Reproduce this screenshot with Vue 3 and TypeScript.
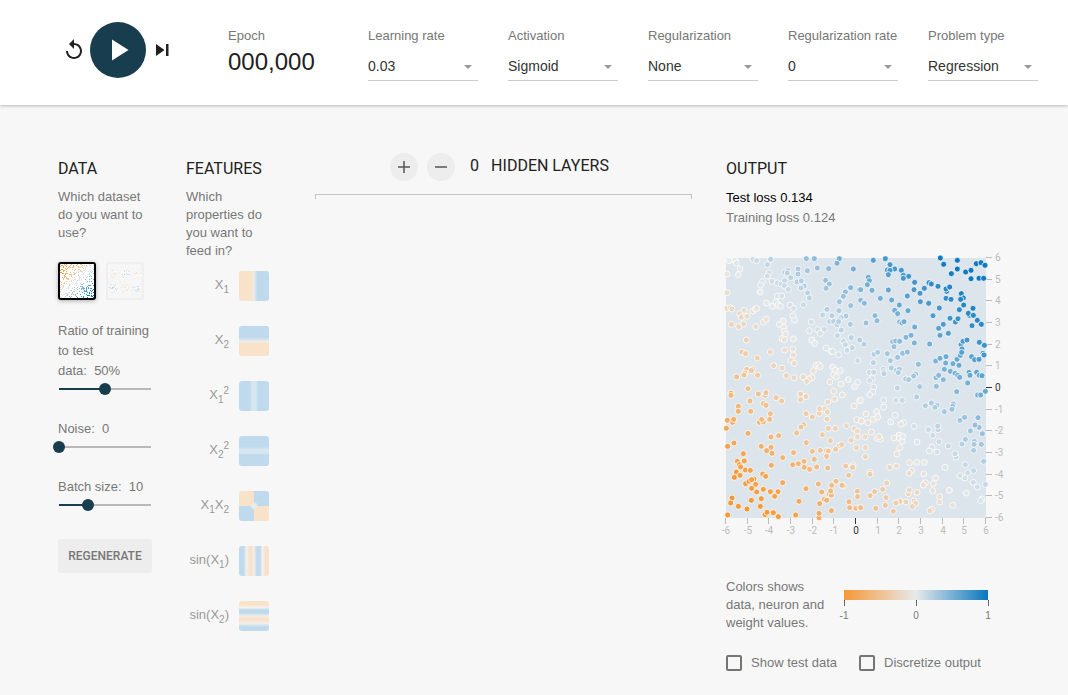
<script setup lang="ts">
import { computed, reactive, ref } from 'vue'

interface Dropdown {
  id: string
  label: string
  value: string
  options: string[]
}

interface Slider {
  id: string
  label: string
  value: number
  min: number
  max: number
  step: number
  suffix: string
}

interface Dot {
  x: number
  y: number
  fill: string
}

interface Tile {
  dx: number
  dy: number
  points: string
}

const dropdowns = reactive<Dropdown[]>([
  { id: 'rate', label: 'Learning rate', value: '0.03', options: ['0.01', '0.03', '0.1', '0.3'] },
  { id: 'activation', label: 'Activation', value: 'Sigmoid', options: ['ReLU', 'Tanh', 'Sigmoid', 'Linear'] },
  { id: 'reg', label: 'Regularization', value: 'None', options: ['None', 'L1', 'L2'] },
  { id: 'regrate', label: 'Regularization rate', value: '0', options: ['0', '0.001', '0.01', '0.1'] },
  { id: 'problem', label: 'Problem type', value: 'Regression', options: ['Classification', 'Regression'] },
])

const sliders = reactive<Slider[]>([
  { id: 'ratio', label: 'Ratio of training to test data:', value: 50, min: 0, max: 100, step: 10, suffix: '%' },
  { id: 'noise', label: 'Noise:', value: 0, min: 0, max: 50, step: 5, suffix: '' },
  { id: 'batch', label: 'Batch size:', value: 10, min: 1, max: 30, step: 1, suffix: '' },
])

const features = [
  { id: 'x', html: 'X<sub>1</sub>' },
  { id: 'y', html: 'X<sub>2</sub>' },
  { id: 'xsq', html: 'X<sub>1</sub><sup>2</sup>' },
  { id: 'ysq', html: 'X<sub>2</sub><sup>2</sup>' },
  { id: 'xy', html: 'X<sub>1</sub>X<sub>2</sub>' },
  { id: 'sinx', html: 'sin(X<sub>1</sub>)' },
  { id: 'siny', html: 'sin(X<sub>2</sub>)' },
]

const layers = ref(0)
const dataset = ref('plane')
const showTest = ref(false)
const discretize = ref(false)
const ticks = [-6, -5, -4, -3, -2, -1, 0, 1, 2, 3, 4, 5, 6]

const fillPercent = (s: Slider): string => `${((s.value - s.min) / (s.max - s.min)) * 100}%`

// Diverging scale: orange at -1, light grey at 0, blue at 1.
const NEGATIVE = [245, 152, 54]
const NEUTRAL = [232, 234, 235]
const POSITIVE = [14, 121, 190]

function colorFor(value: number): string {
  const t = Math.min(1, Math.abs(value))
  const end = value < 0 ? NEGATIVE : POSITIVE
  return `rgb(${NEUTRAL.map((c, i) => Math.round(c + (end[i] - c) * t)).join(',')})`
}

// Samples are grouped by quadrant, on a plot of 780 units a side.
const SIDE = 780
const tiles: Tile[] = [
  {
    dx: -33,
    dy: -39,
    points:
      '43,47 60,46 64,54 75,72 70,89 36,87 36,143 114,43 125,47 167,43 157,59 162,84 157,93 142,110 137,120 136,141 171,109 187,114 198,117 209,107 209,82 219,76 217,84 227,98 208,122 220,133 249,72 249,87 277,77 246,111 259,108 268,123 258,129 278,144 283,159 265,179 274,41 298,41 307,69 341,71 373,41 366,55 415,72 332,106 343,117 333,130 407,128 391,141 385,154 373,170 407,182 433,134 437,166 447,175 187,153 200,153 154,174 183,171 172,184 189,180 196,184 225,180 236,190 234,212 239,225 205,228 193,238 206,247 208,259 211,268 201,281 208,284 235,282 36,190 46,188 51,192 74,206 87,196 79,217 96,214 113,198 121,192 125,190 49,238 71,245 86,237 122,245 145,231 154,223 94,285 80,321 92,326 127,339 166,321 176,362 201,369 209,315 234,312 235,330 228,346 238,355 214,392 237,398 264,396 95,373 113,373 90,384 87,390 109,377 128,391 65,396 99,431 289,231 283,257 308,254 316,265 328,253 290,285 299,295 333,309 349,319 353,319 371,329 323,210 336,193 351,212 372,197 393,213 378,218 372,224 344,230 356,229 366,239 371,230 406,238 379,255 367,272 409,278 386,289 391,299 412,308 396,316 434,285 428,347 303,361 311,359 316,365 295,377 291,398 282,402 275,409 353,366 360,376 376,377 356,389 364,395 345,411 378,417 400,404 428,412 419,425',
  },
  {
    dx: 402,
    dy: -39,
    points:
      '40,46 76,41 90,59 104,72 82,75 90,76 85,89 124,76 130,91 146,94 130,100 164,112 25,97 28,107 22,119 2,134 36,136 85,135 162,134 193,130 207,113 214,117 234,124 180,145 142,153 61,160 95,165 118,180 181,170 206,175 13,175 104,196 113,206 144,197 45,212 51,227 18,234 119,231 126,234 132,230 164,246 219,212 238,189 236,250 250,238 240,271 265,265 270,220 286,231 294,221 98,290 107,288 119,289 102,305 138,277 153,271 163,294 209,297 12,298 42,328 53,322 82,326 113,337 128,325 142,321 40,353 91,347 70,373 71,380 72,386 94,369 109,376 118,373 115,383 175,358 167,388 161,393 137,402 146,404 28,382 41,382 36,401 29,407 41,426 112,429 179,425 229,424 228,398 236,391 250,404 227,348 240,340 258,335 257,354 279,356 291,343 297,361 253,373 271,379 285,385 293,391 299,397 241,39 251,58 292,46 292,72 274,86 317,81 333,76 349,56 363,53 375,61 333,101 357,100 371,100 260,139 258,132 269,126 258,160 273,163 304,146 310,159 302,163 311,180 298,194 339,190 328,211 325,205 340,211 352,226 364,238 336,242 303,299 309,289 321,285 306,312 301,331 305,322 358,292 373,301 369,325 372,330 335,335 344,344 357,343 327,382 330,391 350,382 358,391 366,392 323,414',
  },
  {
    dx: -33,
    dy: 381,
    points:
      '48,24 48,31 130,27 151,31 153,23 105,48 183,38 200,48 145,56 153,61 70,64 70,79 107,79 166,86 164,103 37,106 53,112 56,103 34,130 133,112 145,111 140,103 99,145 168,156 191,152 38,184 57,174 139,184 168,187 155,197 171,205 85,206 67,229 88,228 73,239 77,246 91,255 106,256 64,261 75,271 58,277 203,218 236,203 169,241 143,267 152,274 203,293 92,296 102,289 117,282 110,284 122,298 110,310 125,321 145,313 166,320 189,320 179,334 51,339 47,354 70,364 96,372 109,346 139,341 136,364 38,390 150,389 156,382 175,383 190,395 242,390 252,349 257,27 273,35 257,44 273,86 292,96 266,119 258,126 245,144 274,173 328,72 337,81 313,85 314,71 336,102 338,51 356,19 359,42 382,30 417,63 434,47 425,104 439,108 394,122 418,131 427,139 427,156 408,166 340,130 361,130 322,149 346,167 373,182 380,179 362,193 334,197 340,198 316,196 292,199 335,214 298,223 267,229 250,236 233,239 268,247 284,253 305,246 338,249 273,311 310,297 320,321 350,301 363,289 385,303 381,301 343,327 349,330 347,318 328,343 335,346 314,356 349,377 312,398 312,385 401,271 392,243 414,242 413,247 424,188 427,319 428,335 402,350 404,368 423,370 435,367',
  },
  {
    dx: 402,
    dy: 381,
    points:
      '38,21 29,29 71,45 71,66 108,46 127,46 170,36 196,62 214,54 231,61 225,67 253,80 280,57 278,64 276,73 290,20 376,19 353,30 362,30 2,46 18,87 50,80 40,103 53,96 4,108 24,113 105,91 92,111 131,113 123,118 162,124 205,134 234,134 233,123 218,151 34,141 15,156 52,160 61,162 57,155 102,159 117,150 118,160 127,168 128,154 171,171 119,188 111,207 237,170 265,183 216,187 208,198 231,201 288,216 285,206 306,177 316,163 300,106 314,97 354,98 357,127 345,120 331,138 367,146 343,169 342,178 364,178 341,196 371,229 316,239 255,247 341,257 323,263 300,272 315,279 340,292 352,306 376,298 319,324 268,316 366,342 362,347 278,361 16,188 16,215 30,262 30,268 80,294 68,313 44,320 30,332 78,338 76,361 47,370 2,368 100,379 89,247 109,243 148,233 170,232 193,232 155,257 147,265 191,267 227,279 196,293 190,300 220,296 218,317 171,322 145,326 148,315 239,335 239,351 216,373 210,377 120,349 108,354 138,351 162,348 167,355 157,365',
  },
]

const samples = computed<Dot[]>(() =>
  tiles.flatMap((tile) =>
    tile.points.split(' ').map((pair) => {
      const [px, py] = pair.split(',').map(Number)
      const x = px + tile.dx
      const y = py + tile.dy
      const label = ((x / SIDE) * 12 - 6 + (6 - (y / SIDE) * 12)) / 10
      return { x, y, fill: colorFor(label) }
    }),
  ),
)

function seededRandom(seed: number): () => number {
  let state = seed
  return () => {
    state = (state * 16807) % 2147483647
    return state / 2147483647
  }
}

function planeLabel(x: number, y: number): number {
  return (x + y) / 10
}

const bumps = [
  [-4, 2.5, 1],
  [0, 2.5, -1],
  [4, 2.5, 1],
  [-4, -2.5, -1],
  [0, -2.5, 1],
  [4, -2.5, -1],
]

function gaussLabel(x: number, y: number): number {
  let label = 0
  for (const [cx, cy, sign] of bumps) {
    const v = sign * Math.max(0, 1 - Math.hypot(x - cx, y - cy) / 2)
    if (Math.abs(v) > Math.abs(label)) label = v
  }
  return label
}

// Thumbnails have their y axis pointing down.
function preview(label: (x: number, y: number) => number, seed: number): Dot[] {
  const random = seededRandom(seed)
  return Array.from({ length: 330 }, () => {
    const x = random() * 12 - 6
    const y = random() * 12 - 6
    return { x: Math.floor(((x + 6) / 12) * 34), y: Math.floor(((y + 6) / 12) * 34), fill: colorFor(label(x, y) * 1.1) }
  })
}

const datasets = [
  { id: 'plane', name: 'Plane', dots: preview(planeLabel, 4211) },
  { id: 'gauss', name: 'Multi gaussian', dots: preview(gaussLabel, 977) },
]
</script>

<template>
  <div class="page">
    <header class="top">
      <div class="controls">
        <button class="icon-btn" type="button" aria-label="Reset">
          <svg width="24" height="24" viewBox="0 0 24 24"><path fill="#212121" d="M12 5V1L7 6l5 5V7c3.31 0 6 2.69 6 6s-2.69 6-6 6-6-2.69-6-6H4c0 4.42 3.58 8 8 8s8-3.58 8-8-3.58-8-8-8z" /></svg>
        </button>
        <button class="play" type="button" aria-label="Play">
          <svg width="36" height="36" viewBox="0 0 24 24"><path fill="#fff" d="M8 5v14l11-7z" /></svg>
        </button>
        <button class="icon-btn" type="button" aria-label="Step">
          <svg width="24" height="24" viewBox="0 0 24 24"><path fill="#212121" d="M6 18l8.500-6L6 6v12zM16 6v12h2.500V6z" /></svg>
        </button>
      </div>
      <div class="epoch">
        <span class="label">Epoch</span>
        <div class="epoch-value">000,000</div>
      </div>
      <div v-for="d in dropdowns" :key="d.id" class="dropdown">
        <label class="label" :for="d.id">{{ d.label }}</label>
        <div class="select-box">
          <select :id="d.id" v-model="d.value">
            <option v-for="o in d.options" :key="o">{{ o }}</option>
          </select>
        </div>
      </div>
    </header>

    <main class="main">
      <section class="data">
        <h4>Data</h4>
        <p>Which dataset do you want to use?</p>
        <div class="thumbs">
          <button
            v-for="set in datasets"
            :key="set.id"
            type="button"
            class="thumb"
            :class="{ selected: dataset === set.id }"
            :aria-label="set.name"
            @click="dataset = set.id"
          >
            <svg viewBox="0 0 34 34" shape-rendering="crispEdges">
              <rect v-for="(dot, i) in set.dots" :key="i" :x="dot.x" :y="dot.y" width="1" height="1" :fill="dot.fill" />
            </svg>
          </button>
        </div>
        <div class="sliders">
          <div v-for="s in sliders" :key="s.id" class="slider">
            <label :for="s.id">{{ s.label }}&nbsp;&nbsp;{{ s.value }}{{ s.suffix }}</label>
            <input
              :id="s.id"
              v-model.number="s.value"
              type="range"
              :min="s.min"
              :max="s.max"
              :step="s.step"
              :style="{ '--fill': fillPercent(s) }"
            />
          </div>
        </div>
        <button class="regenerate" type="button">Regenerate</button>
      </section>

      <section class="features">
        <h4>Features</h4>
        <p>Which properties do you want to feed in?</p>
        <ul>
          <li v-for="f in features" :key="f.id">
            <span class="feature-name" v-html="f.html"></span>
            <span class="swatch" :class="f.id"></span>
          </li>
        </ul>
      </section>

      <section class="network">
        <div class="layer-controls">
          <button type="button" aria-label="Add layer" @click="layers++">
            <svg width="18" height="18" viewBox="0 0 24 24"><path fill="#555" d="M20 13h-7v7h-2v-7H4v-2h7V4h2v7h7z" /></svg>
          </button>
          <button type="button" aria-label="Remove layer" @click="layers = Math.max(0, layers - 1)">
            <svg width="18" height="18" viewBox="0 0 24 24"><path fill="#555" d="M20 13H4v-2h16z" /></svg>
          </button>
          <span class="layer-count">{{ layers }}</span>
          <h4>Hidden layers</h4>
        </div>
        <div class="bracket"></div>
      </section>

      <section class="output">
        <h4>Output</h4>
        <div class="loss test">Test loss 0.134</div>
        <div class="loss">Training loss 0.124</div>
        <svg class="plot" width="284" height="280" viewBox="0 0 284 280" role="img" aria-label="Output heatmap">
          <rect width="260" height="260" fill="#dce5ec" />
          <g class="axis">
            <g v-for="t in ticks" :key="t" :class="{ zero: t === 0 }">
              <rect :x="Math.round(((t + 6) / 12) * 260) - 1" y="260" width="1" height="6" />
              <text :x="Math.round(((t + 6) / 12) * 260)" y="276" text-anchor="middle">{{ t }}</text>
              <rect x="260" :y="Math.round(((6 - t) / 12) * 260) - 1" width="6" height="1" />
              <text x="269" :y="Math.round(((6 - t) / 12) * 260) + 3">{{ t }}</text>
            </g>
          </g>
          <svg class="samples" width="260" height="260" :viewBox="`0 0 ${SIDE} ${SIDE}`">
            <circle v-for="(dot, i) in samples" :key="i" :cx="dot.x" :cy="dot.y" r="9" :fill="dot.fill" />
          </svg>
        </svg>
        <div class="legend">
          <p>Colors shows data, neuron and weight values.</p>
          <div class="scale">
            <div class="gradient"></div>
            <div class="scale-labels"><span>-1</span><span>0</span><span>1</span></div>
          </div>
        </div>
        <div class="checks">
          <label><input v-model="showTest" type="checkbox" />Show test data</label>
          <label><input v-model="discretize" type="checkbox" />Discretize output</label>
        </div>
      </section>
    </main>
  </div>
</template>

<style>
body {
  margin: 0;
  background: #f7f7f7;
}
</style>

<style scoped>
.page {
  min-height: 100vh;
  box-sizing: border-box;
  font-family: "Liberation Sans", Arial, sans-serif;
  font-size: 13px;
  line-height: 18px;
  color: #777;
}
button {
  border: 0;
  padding: 0;
  background: none;
  font: inherit;
  cursor: pointer;
}
h4 {
  margin: 0;
  font: 400 16px/22px Roboto, sans-serif;
  color: #212121;
  text-transform: uppercase;
}
p {
  margin: 8px 0 0;
}
.top {
  display: flex;
  align-items: flex-start;
  gap: 30px;
  padding: 22px 30px 24px 62px;
  background: #fff;
  box-shadow: 0 1px 3px rgba(0, 0, 0, 0.25);
}
.controls {
  flex: none;
  display: flex;
  align-items: center;
  gap: 4px;
  width: 136px;
}
.icon-btn {
  width: 24px;
  height: 24px;
}
.icon-btn svg,
.play svg {
  display: block;
}
.play {
  display: grid;
  place-items: center;
  width: 56px;
  height: 56px;
  border-radius: 50%;
  background: #183d4e;
}
.label {
  display: block;
  margin-top: 5px;
  white-space: nowrap;
}
.epoch,
.dropdown {
  flex: 1;
  min-width: 0;
}
.epoch-value {
  font-size: 24px;
  line-height: 34px;
  color: #212121;
}
.select-box {
  position: relative;
  margin-top: 8px;
}
.select-box::after {
  content: "";
  position: absolute;
  right: 6px;
  top: 12px;
  border: 4px solid transparent;
  border-top-color: #999;
  border-bottom: 0;
  pointer-events: none;
}
select {
  display: block;
  width: 100%;
  height: 28px;
  padding: 0 16px 2px 0;
  border: 0;
  border-bottom: 1px solid #ccc;
  border-radius: 0;
  appearance: none;
  background: transparent;
  font: 14px "Liberation Sans", Arial, sans-serif;
  color: #333;
}
.main {
  display: grid;
  grid-template-columns: 94px 84px minmax(0, 1fr) 284px;
  column-gap: 34px;
  padding: 53px 58px 20px;
}
.thumbs {
  display: flex;
  gap: 10px;
  margin-top: 20px;
}
.thumb {
  width: 38px;
  height: 38px;
  box-sizing: border-box;
  border: 2px solid #ddd;
  border-radius: 3px;
  opacity: 0.3;
}
.thumb.selected {
  border-color: #000;
  background: #fff;
  box-shadow: 0 1px 4px rgba(0, 0, 0, 0.3);
  opacity: 1;
}
.thumb svg {
  display: block;
}
.sliders {
  display: grid;
  gap: 22px;
  margin-top: 21px;
}
.slider label {
  display: block;
  line-height: 20px;
}
.slider input {
  display: block;
  width: calc(100% + 10px);
  height: 16px;
  margin: 0 -5px;
  appearance: none;
  background: linear-gradient(to right, #183d4e var(--fill), #b8b8b8 var(--fill)) center / calc(100% - 12px) 2px no-repeat;
}
.slider input::-webkit-slider-thumb {
  appearance: none;
  width: 12px;
  height: 12px;
  border-radius: 50%;
  background: #183d4e;
}
.regenerate {
  width: 100%;
  height: 34px;
  margin-top: 26px;
  border-radius: 3px;
  background: #ededed;
  font: 500 12px/34px Roboto, sans-serif;
  text-transform: uppercase;
  color: #777;
}
ul {
  display: grid;
  gap: 25px;
  margin: 11px 0 0;
  padding: 0;
  list-style: none;
}
li {
  display: flex;
  justify-content: flex-end;
  align-items: center;
  gap: 10px;
  height: 30px;
  margin-right: 1px;
}
.feature-name {
  margin-bottom: 2px;
  white-space: nowrap;
  color: #999;
}
.feature-name :deep(sub),
.feature-name :deep(sup) {
  font-size: 10px;
  line-height: 0;
}
.swatch {
  width: 30px;
  height: 30px;
  border-radius: 3px;
}
.x {
  background: linear-gradient(to right, #f9e2ca 42%, #f2ece4 48%, #d5e5ed 54%, #bedaec 62%);
}
.y {
  background: linear-gradient(to top, #f9e2ca 42%, #f2ece4 48%, #d5e5ed 54%, #bedaec 62%);
}
.xsq {
  background: linear-gradient(to right, #bedaec 36%, #d7e7ef 44%, #d7e7ef 56%, #bedaec 64%);
}
.ysq {
  background: linear-gradient(to bottom, #bedaec 36%, #d7e7ef 44%, #d7e7ef 56%, #bedaec 64%);
}
.xy {
  background:
    radial-gradient(circle, #e9ecec 8%, transparent 22%),
    conic-gradient(#bedaec 25%, #f9e2ca 0 50%, #bedaec 0 75%, #f9e2ca 0);
}
.sinx {
  background: linear-gradient(to right, #bedaec 14%, #f3f1ee 26%, #f9e2ca 34%, #f9e2ca 42%, #f2eee9 50%, #bedaec 60%, #bedaec 70%, #f3f1ee 78%, #f9e2ca 88%);
}
.siny {
  background: linear-gradient(to top, #bedaec 14%, #f3f1ee 26%, #f9e2ca 34%, #f9e2ca 42%, #f2eee9 50%, #bedaec 60%, #bedaec 70%, #f3f1ee 78%, #f9e2ca 88%);
}
.network {
  padding-left: 11px;
}
.layer-controls {
  display: flex;
  justify-content: center;
  align-items: center;
  height: 28px;
  margin-top: -5px;
  padding-right: 8px;
}
.layer-controls button {
  display: grid;
  place-items: center;
  width: 28px;
  height: 28px;
  margin-right: 9px;
  border-radius: 50%;
  background: #ededed;
}
.layer-count {
  margin: 0 12px 2px 6px;
  font: 16px/22px Roboto, sans-serif;
  color: #212121;
}
.layer-controls h4 {
  margin-bottom: 2px;
}
.bracket {
  height: 4px;
  margin-top: 13px;
  border: 1px solid #c4c4c4;
  border-bottom: 0;
}
.loss {
  line-height: 20px;
}
.loss.test {
  margin-top: 8px;
  color: #000;
}
.plot {
  display: block;
  margin-top: 30px;
  overflow: visible;
}
.axis {
  font: 10px Roboto, sans-serif;
  fill: #bbb;
}
.axis .zero {
  fill: #333;
}
.samples {
  overflow: visible;
}
.samples circle {
  stroke: #fff;
  stroke-opacity: 0.75;
  stroke-width: 3;
}
.legend {
  display: flex;
  align-items: flex-start;
  gap: 8px;
  margin-top: 40px;
}
.legend p {
  width: 110px;
  margin: 0;
}
.scale {
  width: 144px;
  margin-top: 12px;
}
.gradient {
  height: 10px;
  background: linear-gradient(to right, #f59836, #e8eaeb, #0877bd);
}
.scale-labels {
  display: flex;
  justify-content: space-between;
  margin: 0 -10px;
  font-size: 10px;
  line-height: 20px;
}
.scale-labels span {
  width: 20px;
  text-align: center;
}
.scale-labels span::before {
  content: "";
  display: block;
  width: 1px;
  height: 6px;
  margin: 0 auto;
  background: #666;
}
.checks {
  display: flex;
  gap: 22px;
  margin-top: 22px;
}
.checks label {
  display: flex;
  align-items: center;
  gap: 9px;
  white-space: nowrap;
}
.checks input {
  width: 16px;
  height: 16px;
  margin: 0;
  box-sizing: border-box;
  appearance: none;
  border: 2px solid #757575;
  border-radius: 2px;
}
.checks input:checked {
  background: #757575;
}
</style>
